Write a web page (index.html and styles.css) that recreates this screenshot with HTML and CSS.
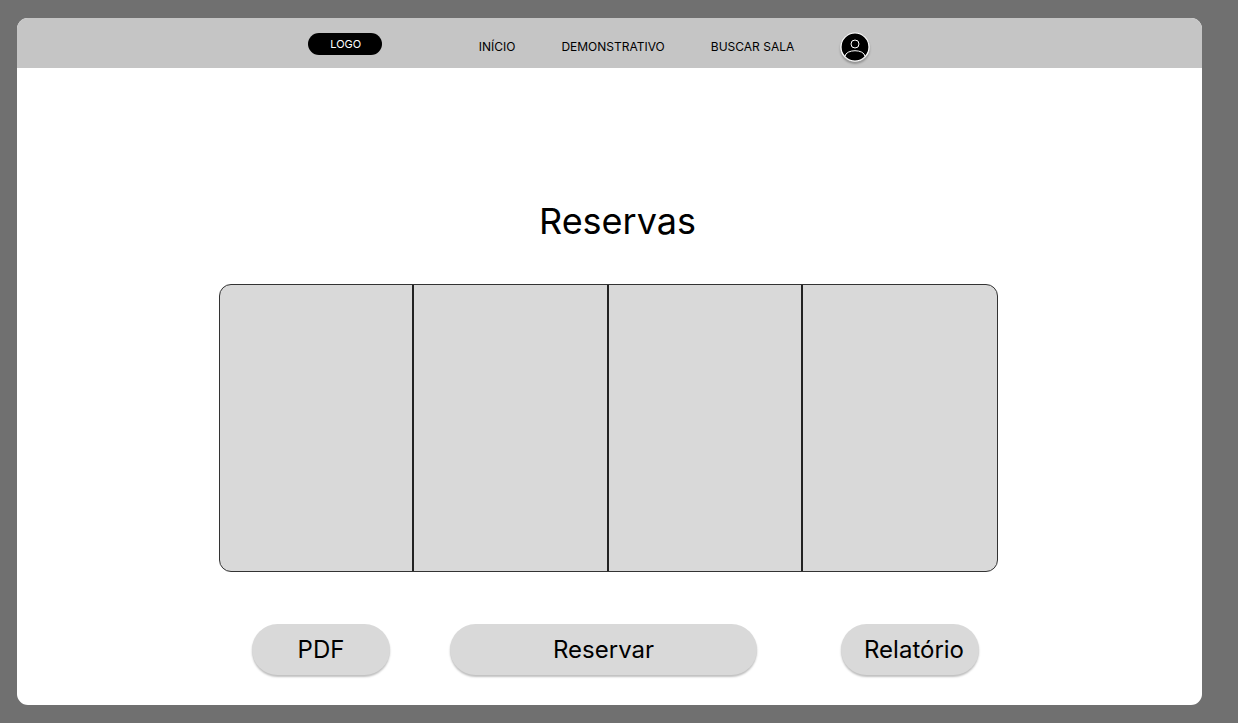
FILE: index.html
```html
<!DOCTYPE html>
<html lang="pt-BR">
<head>
<meta charset="utf-8">
<meta name="viewport" content="width=device-width, initial-scale=1">
<title>Reservas</title>
<link rel="stylesheet" href="styles.css">
</head>
<body>
<div class="window">
  <header class="topbar">
    <a class="logo" href="#">LOGO</a>
    <nav class="menu">
      <a class="menu-link" href="#">INÍCIO</a>
      <a class="menu-link" href="#">DEMONSTRATIVO</a>
      <a class="menu-link" href="#">BUSCAR SALA</a>
      <button class="avatar" type="button" aria-label="Perfil">
        <svg class="avatar-icon" viewBox="0 0 30 30" fill="none" stroke="#fff" aria-hidden="true">
          <circle cx="15" cy="15" r="14" fill="#000" stroke-width="1.2"/>
          <circle cx="15" cy="12" r="4"/>
          <path d="M5 24.500C5.500 16.800 24.500 16.800 25 24.500"/>
        </svg>
      </button>
    </nav>
  </header>
  <main class="content">
    <h1 class="title">Reservas</h1>
    <section class="board" aria-label="Reservas">
      <div class="slot"></div>
      <div class="slot"></div>
      <div class="slot"></div>
      <div class="slot"></div>
    </section>
    <div class="actions">
      <button class="action" type="button">PDF</button>
      <button class="action action-main" type="button">Reservar</button>
      <button class="action action-report" type="button">Relatório</button>
    </div>
  </main>
</div>
</body>
</html>
```

FILE: styles.css
```css
* {
  box-sizing: border-box;
}

body {
  display: flex;
  min-height: 100vh;
  margin: 0;
  padding: 18px 36px 18px 17px;
  background: #707070;
  color: #000;
  font-family: Inter, "Liberation Sans", sans-serif;
}

.window {
  display: flex;
  flex: 1;
  flex-direction: column;
  overflow: hidden;
  border-radius: 11px;
  background: #fff;
}

.topbar {
  display: flex;
  justify-content: center;
  gap: 97px;
  min-height: 50px;
  padding: 14px 41px 4px 0;
  background: #c5c5c5;
}

.logo {
  display: flex;
  align-items: center;
  justify-content: center;
  width: 74px;
  height: 22px;
  margin-top: 1px;
  padding-left: 2px;
  border-radius: 11px;
  background: #000;
  color: #fff;
  font-size: 11px;
  text-decoration: none;
}

.menu {
  display: flex;
  align-items: center;
  gap: 46px;
  height: 30px;
}

.menu-link {
  color: #000;
  font-size: 12px;
  line-height: 16px;
  text-decoration: none;
}

.avatar {
  width: 30px;
  height: 30px;
  padding: 0;
  border: 0;
  border-radius: 50%;
  background: none;
  box-shadow: 0 2px 2px rgba(0, 0, 0, 0.25);
}

.avatar-icon {
  display: block;
  width: 100%;
}

.content {
  display: flex;
  flex: 1;
  flex-direction: column;
  width: 100%;
  max-width: 781px;
  margin: 0 auto;
  padding-right: 2px;
}

.title {
  margin: 131px 0 41px;
  padding-left: 18px;
  font-size: 36px;
  font-weight: 400;
  line-height: 44px;
  text-align: center;
}

.board {
  display: grid;
  grid-template-columns: repeat(4, 1fr);
  min-height: 288px;
  border: 1px solid #333;
  border-radius: 12px;
  background: #d9d9d9;
}

.slot:not(:last-child) {
  border-right: 2px solid #222;
}

.actions {
  display: flex;
  margin-top: 52px;
  padding: 0 19px 30px 33px;
}

.action {
  width: 138px;
  height: 51px;
  padding: 0;
  border: 0;
  border-radius: 26px;
  background: #d9d9d9;
  box-shadow: 0 2px 2px rgba(0, 0, 0, 0.25);
  color: #000;
  font-family: inherit;
  font-size: 24px;
  font-weight: 400;
}

.action-main {
  flex: 1;
  margin: 0 84px 0 60px;
}

.action-report {
  padding-left: 8px;
}
```
